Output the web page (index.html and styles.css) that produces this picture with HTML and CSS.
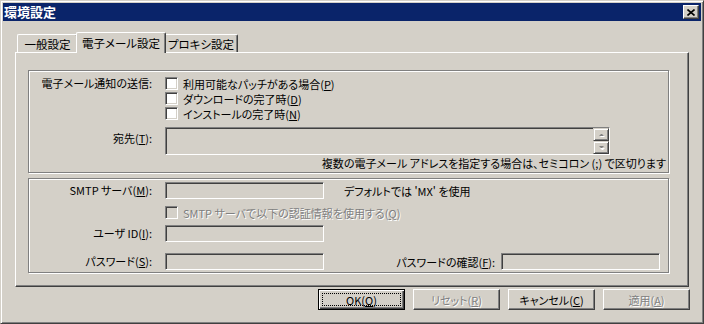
FILE: index.html
```html
<!DOCTYPE html>
<html lang="ja">
<head>
<meta charset="utf-8">
<title>環境設定</title>
<link rel="stylesheet" href="styles.css">
</head>
<body>
<div class="window">
  <div class="titlebar">
    <span class="title">環境設定</span>
    <span class="close"><svg width="8" height="7" viewBox="0 0 8 7"><path d="M0.5 0.5 L7.5 6.5 M7.5 0.5 L0.5 6.5" stroke="#000" stroke-width="1.6" fill="none"/></svg></span>
  </div>
  <div class="body">
    <div class="tabs">
      <div class="tab t1">一般設定</div>
      <div class="tab t2 active">電子メール設定</div>
      <div class="tab t3">プロキシ設定</div>
    </div>
    <div class="panel">
      <div class="group g1">
        <div class="row">
          <div class="label">電子メール通知の送信:</div>
          <div class="checks">
            <div class="check"><span class="box"></span><span class="ctext">利用可能なパッチがある場合(<u>P</u>)</span></div>
            <div class="check"><span class="box"></span><span class="ctext">ダウンロードの完了時(<u>D</u>)</span></div>
            <div class="check"><span class="box"></span><span class="ctext">インストールの完了時(<u>N</u>)</span></div>
          </div>
        </div>
        <div class="row to-row">
          <div class="label to-label">宛先(<u>T</u>):</div>
          <div class="field multi">
            <div class="spin">
              <span class="sbtn"><svg width="7" height="4" viewBox="0 0 7 4"><path d="M1 3 L3 1 L4 1 L6 3 Z" fill="#fff" transform="translate(1,1)"/><path d="M1 3 L3 1 L4 1 L6 3 Z" fill="#808080"/></svg></span>
              <span class="sbtn"><svg width="7" height="4" viewBox="0 0 7 4"><path d="M1 1 L6 1 L4 3 L3 3 Z" fill="#fff" transform="translate(1,1)"/><path d="M1 0 L6 0 L4 2 L3 2 Z" fill="#808080"/></svg></span>
            </div>
          </div>
        </div>
        <div class="hint">複数の電子メール アドレスを指定する場合は、セミコロン (;) で区切ります</div>
      </div>
      <div class="group g2">
        <div class="row mid">
          <div class="label">SMTP サーバ(<u>M</u>):</div>
          <div class="field"></div>
          <div class="note">デフォルトでは 'MX' を使用</div>
        </div>
        <div class="row mid auth-row">
          <div class="check disabled"><span class="box"></span><span class="ctext dis">SMTP サーバで以下の認証情報を使用する(<u>Q</u>)</span></div>
        </div>
        <div class="row mid user-row">
          <div class="label">ユーザ ID(<u>I</u>):</div>
          <div class="field"></div>
        </div>
        <div class="row mid pass-row">
          <div class="label">パスワード(<u>S</u>):</div>
          <div class="field"></div>
          <div class="label2">パスワードの確認(<u>F</u>):</div>
          <div class="field"></div>
        </div>
      </div>
    </div>
    <div class="buttons">
      <div class="btn default"><span class="focus">OK(<u>O</u>)</span></div>
      <div class="btn dis-btn"><span class="dis">リセット(<u>R</u>)</span></div>
      <div class="btn">キャンセル(<u>C</u>)</div>
      <div class="btn dis-btn"><span class="dis">適用(<u>A</u>)</span></div>
    </div>
  </div>
</div>
</body>
</html>
```

FILE: styles.css
```css
* { box-sizing: border-box; }
html, body { margin: 0; padding: 0; }
body {
  width: 704px;
  height: 324px;
  overflow: hidden;
  background: #d4d0c8;
  color: #000;
  font: 11px/14px "Noto Sans CJK JP", "Liberation Sans", sans-serif;
  font-feature-settings: "palt" 1;
}
u { text-decoration: underline; text-underline-offset: 1px; }

.window {
  width: 704px;
  height: 324px;
  background: #d4d0c8;
  border: 1px solid;
  border-color: #d4d0c8 #404040 #404040 #d4d0c8;
  box-shadow: inset 1px 1px #fff, inset -1px -1px #808080;
  padding: 2px;
}

.titlebar {
  height: 18px;
  background: #0a246a;
  display: flex;
  align-items: center;
  justify-content: space-between;
  padding: 0 2px 0 1px;
}
.title { color: #fff; font-weight: bold; font-size: 13px; line-height: 16px; }
.close {
  width: 16px;
  height: 14px;
  background: #d4d0c8;
  border: 1px solid;
  border-color: #fff #404040 #404040 #fff;
  box-shadow: inset -1px -1px #808080;
  display: flex;
  align-items: center;
  justify-content: center;
}
.close svg { display: block; }

.body { padding: 11px 12px 0 12px; }

.tabs {
  display: flex;
  align-items: flex-end;
  height: 20px;
  padding-left: 2px;
  position: relative;
  z-index: 1;
  font-size: 11.5px;
}
.tab {
  height: 18px;
  display: flex;
  justify-content: center;
  padding-top: 2px;
  background: #d4d0c8;
  border-left: 1px solid #fff;
  border-top: 1px solid #fff;
  border-right: 1px solid #404040;
  box-shadow: inset -1px 0 #808080;
  border-radius: 2px 2px 0 0;
  white-space: nowrap;
}
.t1 { width: 61px; }
.t2 { width: 86px; }
.t3 { width: 74px; }
.tab.active {
  width: 90px;
  height: 21px;
  margin: 0 -2px -1px;
  padding-top: 3px;
  position: relative;
  z-index: 2;
}

.panel {
  height: 235px;
  border: 1px solid;
  border-color: #fff #404040 #404040 #fff;
  box-shadow: inset -1px -1px #808080;
  padding: 17px 0 0 12px;
}

.group {
  width: 641px;
  border: 1px solid #808080;
  box-shadow: inset 1px 1px #fff, 1px 1px #fff;
}
.g1 { height: 103px; padding-top: 5px; }
.g2 { height: 95px; margin-top: 5px; padding-top: 3px; }

.row { display: flex; }
.row.mid { align-items: center; }
.label {
  width: 123px;
  margin-right: 13px;
  text-align: right;
  flex: none;
  white-space: nowrap;
  line-height: 15px;
}
.checks { display: flex; flex-direction: column; }
.check {
  display: flex;
  align-items: center;
  height: 15px;
  white-space: nowrap;
}
.box {
  width: 13px;
  height: 13px;
  flex: none;
  background: #fff;
  border: 1px solid;
  border-color: #808080 #fff #fff #808080;
  box-shadow: inset 1px 1px #404040, inset -1px -1px #d4d0c8;
}
.ctext { margin-left: 5px; }
.check.disabled .box { background: #d4d0c8; }
.dis { color: #808080; text-shadow: 1px 1px #fff; }

.to-row { margin-top: 6px; }
.to-label { padding-top: 4px; }

.field {
  width: 159px;
  height: 17px;
  flex: none;
  background: #d4d0c8;
  border: 1px solid;
  border-color: #808080 #fff #fff #808080;
  box-shadow: inset 1px 1px #404040, inset -1px -1px #d4d0c8;
}
.field.multi {
  width: 445px;
  height: 28px;
  display: flex;
  justify-content: flex-end;
}
.spin { display: flex; flex-direction: column; width: 16px; }
.sbtn {
  height: 13px;
  background: #d4d0c8;
  border: 1px solid;
  border-color: #d4d0c8 #404040 #404040 #d4d0c8;
  box-shadow: inset 1px 1px #fff, inset -1px -1px #808080;
  display: flex;
  align-items: center;
  justify-content: center;
}
.sbtn svg { display: block; }

.hint {
  margin-top: 1px;
  text-align: right;
  padding-right: 2px;
  white-space: nowrap;
}

.note { margin-left: 20px; white-space: nowrap; }
.auth-row { margin-top: 7px; padding-left: 136px; }
.auth-row .check { height: 13px; }
.user-row { margin-top: 6px; }
.pass-row { margin-top: 11px; }
.label2 {
  width: 171px;
  margin-right: 6px;
  text-align: right;
  white-space: nowrap;
  flex: none;
}

.buttons {
  display: flex;
  justify-content: flex-end;
  gap: 8px;
  margin-top: 2px;
  margin-right: -1px;
}
.btn {
  width: 87px;
  height: 21px;
  display: flex;
  align-items: center;
  justify-content: center;
  background: #d4d0c8;
  border: 1px solid;
  border-color: #fff #404040 #404040 #fff;
  box-shadow: inset -1px -1px #808080, inset 1px 1px #d4d0c8;
  white-space: nowrap;
}
.btn.default {
  border: 1px solid #000;
  box-shadow: inset 1px 1px #fff, inset -1px -1px #404040, inset -2px -2px #808080;
  padding: 3px;
}
.focus {
  flex: 1;
  align-self: stretch;
  border: 1px dotted #000;
  display: flex;
  align-items: center;
  justify-content: center;
}
```
